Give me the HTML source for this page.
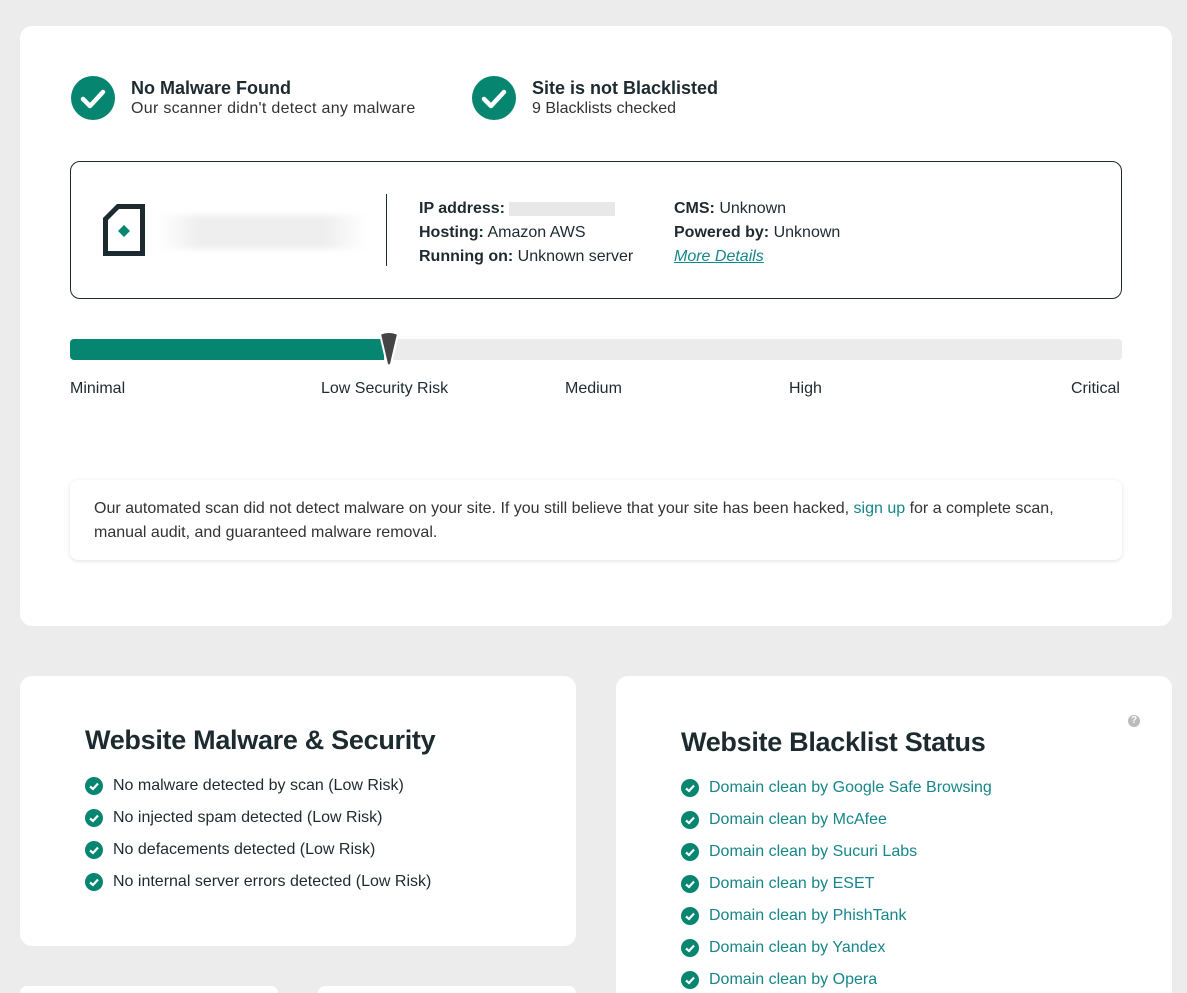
<!DOCTYPE html>
<html style="width:1187px;height:993px;overflow:hidden"><head><meta charset="utf-8"><style>
*{box-sizing:border-box;margin:0;padding:0}
body{width:1187px;height:993px;overflow:hidden;background:#ececec;font-family:"Liberation Sans",sans-serif;color:#1d2a30;position:relative}
.card{position:absolute;background:#fff;border-radius:12px}
.abs{position:absolute}
.chk{position:absolute;width:44px;height:44px;border-radius:50%;background:#068570}
.t1{font-weight:bold;font-size:18px}
.t2{font-size:16px;color:#333}
.list{position:absolute;list-style:none;font-size:16px}
.list li{height:32px;display:flex;align-items:center;white-space:nowrap}
.sc{width:18px;height:18px;border-radius:50%;background:#068570;margin-right:10px;flex:none;display:flex;align-items:center;justify-content:center}
.teal{color:#16868a}
h2{position:absolute;font-size:27px;font-weight:bold;color:#1d2a30;letter-spacing:-0.3px}
</style></head><body>
<div class="card" style="left:20px;top:26px;width:1152px;height:600px"></div>

<div class="chk" style="left:71px;top:76px"><svg width="44" height="44"><path d="M12 23 L19 30 L32 16" stroke="#fff" stroke-width="4.5" fill="none" stroke-linecap="round" stroke-linejoin="round"/></svg></div>
<div class="abs t1" style="left:131px;top:78px">No Malware Found</div>
<div class="abs t2" style="left:131px;top:100px;letter-spacing:0.3px">Our scanner didn't detect any malware</div>
<div class="chk" style="left:472px;top:76px"><svg width="44" height="44"><path d="M12 23 L19 30 L32 16" stroke="#fff" stroke-width="4.5" fill="none" stroke-linecap="round" stroke-linejoin="round"/></svg></div>
<div class="abs t1" style="left:532px;top:78px">Site is not Blacklisted</div>
<div class="abs t2" style="left:532px;top:100px">9 Blacklists checked</div>

<div class="abs" style="left:70px;top:161px;width:1052px;height:138px;border:1px solid #1d2a30;border-radius:10px"></div>
<svg class="abs" style="left:102px;top:203px" width="44" height="54"><path d="M3.5 50.5 V16 L16 3.5 H40.5 V50.5 Z" fill="none" stroke="#1d2a30" stroke-width="5"/><path d="M22 22 L28 28 L22 34 L16 28Z" fill="#068570"/></svg>
<div class="abs" style="left:157px;top:215px;width:210px;height:34px;background:linear-gradient(90deg,#fff,#eee 20%,#eee 80%,#fff);filter:blur(3px)"></div>
<div class="abs" style="left:386px;top:194px;width:1px;height:72px;background:#1d2a30"></div>
<div class="abs" style="left:419px;top:197px;font-size:16px;line-height:24px">
<b>IP address:</b> <span style="display:inline-block;width:106px;height:14px;background:#e8e8e8;vertical-align:middle"></span><br><b>Hosting:</b> Amazon AWS<br><b>Running on:</b> Unknown server</div>
<div class="abs" style="left:674px;top:197px;font-size:16px;line-height:24px">
<b>CMS:</b> Unknown<br><b>Powered by:</b> Unknown<br><i class="teal" style="text-decoration:underline">More Details</i></div>

<div class="abs" style="left:70px;top:339px;width:1052px;height:21px;background:#ebebeb;border-radius:4px"></div>
<div class="abs" style="left:70px;top:339px;width:314px;height:21px;background:#068570;border-radius:4px 0 0 4px"></div>
<svg class="abs" style="left:378px;top:331px" width="22" height="36"><path d="M2 3 Q11 -1 20 3 L13 33 Q11 36 9 33 Z" fill="#444" stroke="#fff" stroke-width="2"/></svg>
<div class="abs" style="left:70px;top:380px;font-size:16px">Minimal</div>
<div class="abs" style="left:321px;top:380px;font-size:16px">Low Security Risk</div>
<div class="abs" style="left:565px;top:380px;font-size:16px">Medium</div>
<div class="abs" style="left:789px;top:380px;font-size:16px">High</div>
<div class="abs" style="left:1071px;top:380px;font-size:16px">Critical</div>

<div class="abs" style="left:70px;top:480px;width:1052px;height:80px;border-radius:8px;box-shadow:0 1px 4px rgba(0,0,0,.12);padding:17px 60px 0 24px;font-size:16px;line-height:24px;color:#333">Our automated scan did not detect malware on your site. If you still believe that your site has been hacked, <span class="teal">sign up</span> for a complete scan, manual audit, and guaranteed malware removal.</div>

<div class="card" style="left:20px;top:676px;width:556px;height:270px"></div>
<h2 style="left:85px;top:725px">Website Malware &amp; Security</h2>
<ul class="list" style="left:85px;top:770px">
<li><span class="sc"><svg width="18" height="18"><path d="M5 9.5 L8 12 L13 6.5" stroke="#fff" stroke-width="2.2" fill="none"/></svg></span>No malware detected by scan (Low Risk)</li>
<li><span class="sc"><svg width="18" height="18"><path d="M5 9.5 L8 12 L13 6.5" stroke="#fff" stroke-width="2.2" fill="none"/></svg></span>No injected spam detected (Low Risk)</li>
<li><span class="sc"><svg width="18" height="18"><path d="M5 9.5 L8 12 L13 6.5" stroke="#fff" stroke-width="2.2" fill="none"/></svg></span>No defacements detected (Low Risk)</li>
<li><span class="sc"><svg width="18" height="18"><path d="M5 9.5 L8 12 L13 6.5" stroke="#fff" stroke-width="2.2" fill="none"/></svg></span>No internal server errors detected (Low Risk)</li>
</ul>

<div class="card" style="left:616px;top:676px;width:556px;height:340px"></div>
<div class="abs" style="left:1128px;top:715px;width:12px;height:12px;border-radius:50%;background:#bbb;color:#fff;font-size:10px;font-weight:bold;text-align:center;line-height:12px">?</div>
<h2 style="left:681px;top:727px">Website Blacklist Status</h2>
<ul class="list teal" style="left:681px;top:772px">
<li><span class="sc"><svg width="18" height="18"><path d="M5 9.5 L8 12 L13 6.5" stroke="#fff" stroke-width="2.2" fill="none"/></svg></span>Domain clean by Google Safe Browsing</li>
<li><span class="sc"><svg width="18" height="18"><path d="M5 9.5 L8 12 L13 6.5" stroke="#fff" stroke-width="2.2" fill="none"/></svg></span>Domain clean by McAfee</li>
<li><span class="sc"><svg width="18" height="18"><path d="M5 9.5 L8 12 L13 6.5" stroke="#fff" stroke-width="2.2" fill="none"/></svg></span>Domain clean by Sucuri Labs</li>
<li><span class="sc"><svg width="18" height="18"><path d="M5 9.5 L8 12 L13 6.5" stroke="#fff" stroke-width="2.2" fill="none"/></svg></span>Domain clean by ESET</li>
<li><span class="sc"><svg width="18" height="18"><path d="M5 9.5 L8 12 L13 6.5" stroke="#fff" stroke-width="2.2" fill="none"/></svg></span>Domain clean by PhishTank</li>
<li><span class="sc"><svg width="18" height="18"><path d="M5 9.5 L8 12 L13 6.5" stroke="#fff" stroke-width="2.2" fill="none"/></svg></span>Domain clean by Yandex</li>
<li><span class="sc"><svg width="18" height="18"><path d="M5 9.5 L8 12 L13 6.5" stroke="#fff" stroke-width="2.2" fill="none"/></svg></span>Domain clean by Opera</li>
</ul>

<div class="card" style="left:20px;top:986px;width:258px;height:7px;border-radius:12px 12px 0 0"></div>
<div class="card" style="left:318px;top:986px;width:258px;height:7px;border-radius:12px 12px 0 0"></div>
</body></html>
